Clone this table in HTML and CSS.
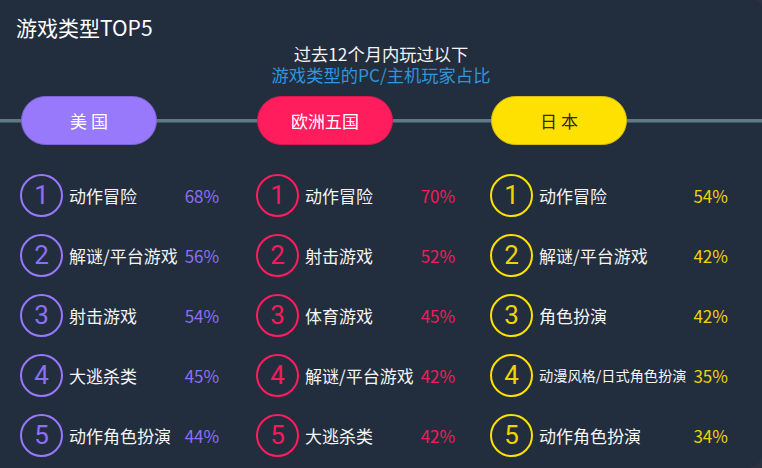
FILE: index.html
```html
<!DOCTYPE html>
<html lang="zh-CN">
<head>
<meta charset="utf-8">
<title>游戏类型TOP5</title>
<link rel="stylesheet" href="styles.css">
</head>
<body>
<div class="page">
  <h1 class="title">游戏类型TOP5</h1>
  <div class="subtitle">
    <div>过去12个月内玩过以下</div>
    <div class="blue">游戏类型的PC/主机玩家占比</div>
  </div>
  <div class="board">
    <section class="col us">
      <div class="pill">美 国</div>
      <div class="list">
        <span class="num">1</span><span class="label">动作冒险</span><span class="pct">68%</span>
        <span class="num">2</span><span class="label">解谜/平台游戏</span><span class="pct">56%</span>
        <span class="num">3</span><span class="label">射击游戏</span><span class="pct">54%</span>
        <span class="num">4</span><span class="label">大逃杀类</span><span class="pct">45%</span>
        <span class="num">5</span><span class="label">动作角色扮演</span><span class="pct">44%</span>
      </div>
    </section>
    <section class="col eu">
      <div class="pill">欧洲五国</div>
      <div class="list">
        <span class="num">1</span><span class="label">动作冒险</span><span class="pct">70%</span>
        <span class="num">2</span><span class="label">射击游戏</span><span class="pct">52%</span>
        <span class="num">3</span><span class="label">体育游戏</span><span class="pct">45%</span>
        <span class="num">4</span><span class="label">解谜/平台游戏</span><span class="pct">42%</span>
        <span class="num">5</span><span class="label">大逃杀类</span><span class="pct">42%</span>
      </div>
    </section>
    <section class="col jp">
      <div class="pill">日 本</div>
      <div class="list">
        <span class="num">1</span><span class="label">动作冒险</span><span class="pct">54%</span>
        <span class="num">2</span><span class="label">解谜/平台游戏</span><span class="pct">42%</span>
        <span class="num">3</span><span class="label">角色扮演</span><span class="pct">42%</span>
        <span class="num">4</span><span class="label small">动漫风格/日式角色扮演</span><span class="pct">35%</span>
        <span class="num">5</span><span class="label">动作角色扮演</span><span class="pct">34%</span>
      </div>
    </section>
  </div>
</div>
</body>
</html>
```

FILE: styles.css
```css
* { box-sizing: border-box; }

html, body {
  margin: 0;
  padding: 0;
  background: #2b333f;
}

.page {
  width: 762px;
  height: 468px;
  background: #222d3e;
  border-radius: 0 8px 14px 0;
  overflow: hidden;
  font-family: "Noto Sans CJK SC", "Noto Sans", sans-serif;
  color: #f3f3f3;
}

.title {
  margin: 0;
  padding: 14px 0 0 16px;
  font-size: 21px;
  line-height: 26px;
  font-weight: 400;
  color: #ffffff;
}

.subtitle {
  margin-top: 3px;
  text-align: center;
  font-size: 17.3px;
  line-height: 21px;
  color: #f3f3f3;
}

.subtitle .blue {
  color: #2f95dc;
}

.board {
  margin-top: 11px;
  padding-left: 20px;
  display: grid;
  grid-template-columns: 236px 234px 1fr;
  background: linear-gradient(#5f7a84, #5f7a84) no-repeat 0 22.5px / 100% 3.5px;
}

.pill {
  width: 136px;
  height: 49px;
  margin-left: 1px;
  border-radius: 25px;
  display: flex;
  align-items: center;
  justify-content: center;
  font-size: 17px;
  color: #ffffff;
  white-space: pre;
}

.us { --c: #9878fb; --b: #7f64d6; --t: #8d70f2; }
.eu { --c: #ff1d5d; --b: #d9184f; --t: #f51b5a; }
.jp { --c: #ffe100; --b: #d7bd10; --t: #f0d400; }

.pill {
  background: var(--c);
  border: 1px solid var(--b);
}

.jp .pill { color: #2a2a2a; }

.list {
  margin-top: 20px;
  display: grid;
  grid-template-columns: 43px auto auto;
  grid-auto-rows: 60px;
  align-items: center;
  justify-content: start;
}

.num {
  width: 43px;
  height: 43px;
  border: 2px solid var(--c);
  border-radius: 50%;
  display: flex;
  align-items: center;
  justify-content: center;
  font-family: Roboto, "Noto Sans", sans-serif;
  font-size: 26px;
  color: var(--t);
  line-height: 1;
}

.label {
  margin-left: 6px;
  font-size: 17px;
  color: #f5f5f5;
  white-space: nowrap;
}

.label.small {
  font-size: 14.2px;
}

.pct {
  margin-left: 7px;
  font-size: 17px;
  color: var(--t);
}
```
